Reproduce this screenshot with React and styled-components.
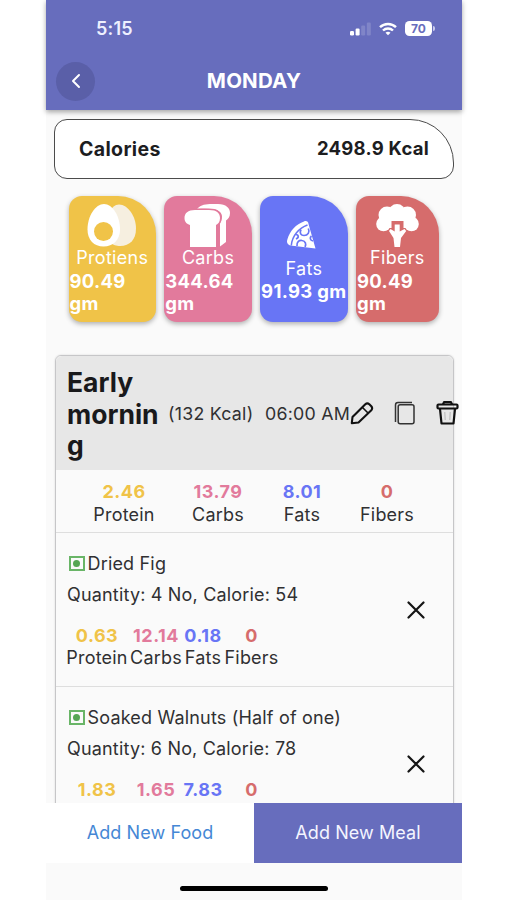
import React from "react";
import styled, { createGlobalStyle } from "styled-components";

const GlobalStyle = createGlobalStyle`
  * { box-sizing: border-box; }
  body { margin: 0; background: #fff; }
`;

const colors = {
  brand: "#676dbd",
  protein: "#f0c348",
  carbs: "#e27a9c",
  fats: "#6875f5",
  fibers: "#d66c6c",
};

const Screen = styled.main`
  width: 416px;
  height: 900px;
  margin-left: 46px;
  display: flex;
  flex-direction: column;
  background: #fafafa;
  color: #303032;
  font-family: Inter, "Liberation Sans", sans-serif;
  font-size: 18px;
  letter-spacing: 0.18px;
`;

const Header = styled.header`
  flex: none;
  height: 110px;
  background: ${colors.brand};
  color: #fff;
  box-shadow: 0 2px 5px rgba(0, 0, 0, 0.35);
  z-index: 1;
`;

const StatusBar = styled.div`
  height: 57px;
  padding: 0 28px 0 50px;
  display: flex;
  align-items: center;
  justify-content: space-between;
`;

const Clock = styled.span`
  font-size: 18px;
  font-weight: 600;
  letter-spacing: 0.2px;
  color: #eef0ff;
`;

const StatusIcons = styled.div`
  display: flex;
  align-items: center;
  gap: 8px;
  height: 16px;
`;

const Battery = styled.span`
  width: 27px;
  height: 15px;
  margin-right: 2px;
  border-radius: 4.5px;
  background: #fff;
  color: ${colors.brand};
  font-size: 12px;
  font-weight: 700;
  line-height: 16px;
  text-align: center;
  letter-spacing: 0;
  position: relative;

  &::after {
    content: "";
    position: absolute;
    right: -2.5px;
    top: 5px;
    width: 1.5px;
    height: 5px;
    border-radius: 0 2px 2px 0;
    background: #c9cbed;
  }
`;

const TitleBar = styled.div`
  display: grid;
  grid-template-columns: 39px 1fr 39px;
  align-items: center;
  height: 48px;
  padding: 0 10px;
`;

const BackButton = styled.button`
  width: 39px;
  height: 39px;
  padding: 0;
  border: 0;
  border-radius: 50%;
  background: #5a5fa8;
  display: grid;
  place-items: center;
`;

const Title = styled.h1`
  margin: 0;
  text-align: center;
  font-size: 20.5px;
  font-weight: 700;
  letter-spacing: 0.2px;
  line-height: 24px;
`;

const Content = styled.section`
  flex: 1;
  min-height: 0;
  overflow: hidden;
  padding: 9px 8px 0;
`;

const CaloriesCard = styled.div`
  height: 60px;
  border: 1.5px solid #4b4b4b;
  border-radius: 13px 44px 13px 13px;
  background: #fff;
  padding: 0 24px;
  display: flex;
  align-items: center;
  justify-content: space-between;
  color: #1d1d1f;
  font-size: 19.5px;
  font-weight: 700;
  letter-spacing: 0.35px;
`;

const CaloriesValue = styled.span`
  font-size: 18.5px;
  letter-spacing: 0.25px;
  margin-top: -2px;
`;

const Tiles = styled.div`
  display: flex;
  gap: 8.3px;
  margin: 17px 14px 0 14.5px;
`;

const Tile = styled.article`
  flex: ${(p) => (p.$narrow ? "0 0 83px" : "0 0 87.5px")};
  height: 126px;
  border-radius: 13px 38px 13px 13px;
  background: ${(p) => p.$color};
  color: #fff;
  box-shadow: 0 2px 5px rgba(0, 0, 0, 0.3);
  display: flex;
  flex-direction: column;
  align-items: center;
  justify-content: center;
`;

const TileLabel = styled.span`
  line-height: 22.5px;
  letter-spacing: 0.3px;
`;

const TileValue = styled.strong`
  align-self: stretch;
  padding-left: 1px;
  font-size: 18.5px;
  font-weight: 700;
  line-height: 22px;
  letter-spacing: 0.3px;
  white-space: ${(p) => (p.$oneLine ? "nowrap" : "normal")};
`;

const MealCard = styled.article`
  height: 600px;
  margin: 33px 0 0 1px;
  border: 1px solid #c6c6c8;
  border-radius: 6px 6px 0 0;
  box-shadow: 0 0 2px rgba(0, 0, 0, 0.16);
`;

const MealHeader = styled.div`
  height: 114px;
  background: #e7e7e7;
  border-radius: 6px 6px 0 0;
  display: flex;
  align-items: center;
  padding-left: 11px;
`;

const MealName = styled.h2`
  flex: 0 0 101px;
  margin: 3px 0 0;
  padding-right: 6px;
  font-size: 26.5px;
  font-weight: 700;
  line-height: 31.5px;
  letter-spacing: 0;
  color: #19191b;
`;

const MealInfo = styled.span`
  flex: 0 0 ${(p) => p.$width}px;
  white-space: nowrap;
  font-size: 17.8px;
  letter-spacing: 0.25px;
`;

const MealActions = styled.div`
  flex: none;
  display: flex;
  align-items: center;
  gap: 20px;
`;

const Totals = styled.div`
  height: 63px;
  padding-top: 11px;
  border-bottom: 1px solid #dedede;
  display: grid;
  grid-template-columns: 91px 97px 71px 99px;
  padding-left: 22.5px;
`;

const Stat = styled.div`
  display: flex;
  flex-direction: column;
  align-items: center;
  white-space: nowrap;
  line-height: 22.5px;
  letter-spacing: 0.2px;
`;

const StatValue = styled.strong`
  font-weight: 700;
  letter-spacing: 0.5px;
  color: ${(p) => p.$color};
`;

const FoodRow = styled.div`
  height: 154.3px;
  padding: 16.5px 28px 0 11px;
  border-bottom: 1px solid #dedede;
  display: flex;
  justify-content: space-between;
`;

const FoodName = styled.div`
  display: flex;
  align-items: center;
  gap: 3px;
  height: 28px;
  padding-left: 2px;
`;

const VegMark = styled.span`
  width: 15.5px;
  height: 15px;
  border: 2px solid #69b567;
  display: grid;
  place-items: center;

  &::after {
    content: "";
    width: 7px;
    height: 7px;
    border-radius: 50%;
    background: #55a653;
  }
`;

const Quantity = styled.div`
  line-height: 22px;
  margin-top: 6px;
`;

const FoodStats = styled.div`
  display: grid;
  grid-template-columns: 60px 58px 36px 61px;
  margin-top: 19px;
`;

const RemoveButton = styled.button`
  align-self: flex-start;
  margin-top: 51.5px;
  padding: 0;
  border: 0;
  background: none;
  display: flex;
`;

const Actions = styled.footer`
  flex: none;
  height: 59.5px;
  display: grid;
  grid-template-columns: 1fr 1fr;
`;

const ActionButton = styled.button`
  border: 0;
  padding: 0;
  font: inherit;
  letter-spacing: 0.08px;
  background: ${(p) => (p.$filled ? colors.brand : "#fff")};
  color: ${(p) => (p.$filled ? "#f4f5ff" : "#4587d5")};
`;

const HomeArea = styled.div`
  flex: none;
  height: 37.5px;
  display: flex;
  justify-content: center;
  padding-top: 23px;
`;

const HomeIndicator = styled.span`
  width: 148px;
  height: 5.5px;
  border-radius: 3px;
  background: #000;
`;

const EggIcon = () => (
  <svg width="50" height="43" viewBox="0 0 50 43">
    <path d="M32 .5c9 0 17 12 17 24 0 11-6 17.500-16 17.500-7 0-14-4-14-17.500C19 12.500 24 .5 32 .5Z" fill="#f6efe0" />
    <path d="M17 0c8.500 0 16 12 16 25.500 0 10.500-7 17-16.500 17S.5 36 .5 25.500C.5 12 8.500 0 17 0Z" fill="#fff" />
    <circle cx="16.500" cy="27.500" r="9.500" fill={colors.protein} />
  </svg>
);

const BreadIcon = () => (
  <svg width="48" height="43" viewBox="0 0 48 43">
    <path d="M13 5C17 .5 22 0 28 0h6c8 0 12 4 12 9 0 4-2 6-4 7.500V38l-6 4.500V19C40 13 38 7 31 5.500 25 4.500 20 4.500 13 5Z" fill="#fff" />
    <path
      d="M11 6h14c8 0 11 3.500 11 8 0 4-2 6-4 7v22H6V21c-3-1-5.500-3-5.500-7C.5 9 4 6 11 6Z"
      fill="#fff"
      stroke={colors.carbs}
      strokeWidth="3.200"
      paintOrder="stroke"
    />
  </svg>
);

const PizzaIcon = () => (
  <svg width="38" height="42" viewBox="0 0 38 42">
    <path d="M19 5.500c2-1 4.500 0 4.500 2.500l7 24.500-23-2.800C3 29.500 1 27 2.500 23 5 15 11 8 19 5.500Z" fill="#fff" />
    <path d="M22.500 9C14 12 7 20 6.300 29.500" fill="none" stroke={colors.fats} strokeWidth="1.500" />
    <g fill="none" stroke={colors.fats} strokeWidth="1.700">
      <path d="M16 13.500c-1.800 3.500 0 6 3 6 4 0 6-3.500 4.300-7" />
      <path d="M12 30c-.5-4 2-6 5-5.500 3.500.5 4.500 3.500 3 6.500" />
      <path d="M10.500 18.500c3 0 4 3 .5 4.500" />
      <path d="m26.500 20c-2 1.500-1.500 4.500 1.500 5" />
    </g>
  </svg>
);

const BroccoliIcon = () => (
  <svg width="43" height="43" viewBox="0 0 43 43">
    <g fill="#fff">
      <circle cx="7.500" cy="20" r="7.300" />
      <circle cx="11" cy="11" r="8.500" />
      <circle cx="21" cy="8.500" r="8.500" />
      <circle cx="31.500" cy="11" r="8.500" />
      <circle cx="35.500" cy="20" r="7.300" />
      <path d="M9 8h25v16H9Z" />
    </g>
    <path d="M15.500 28V17h12v11Z" fill={colors.fibers} />
    <path d="M18.700 20.500h5v7l4.800-2.500 1.700 2-5.200 7-1 9h-5.500l-1-9-4.500-7 1.500-2 4.200 2.500Z" fill="#fff" />
  </svg>
);

const SignalIcon = () => (
  <svg width="21" height="14" viewBox="0 0 21 14" fill="#fff">
    <rect x="0" y="9" width="4" height="4.500" rx="1.200" />
    <rect x="5.600" y="6.500" width="4" height="7" rx="1.200" />
    <rect x="11.200" y="3.500" width="4" height="10" rx="1.200" opacity=".17" />
    <rect x="16.800" y="0.500" width="4" height="13" rx="1.200" opacity=".17" />
  </svg>
);

const WifiIcon = () => (
  <svg width="18" height="14" viewBox="0 0 18 14" fill="none" stroke="#fff" strokeWidth="2.400">
    <path d="M1 5.200c4.500-4.300 11.500-4.300 16 0M4 8.500c2.800-2.700 7.200-2.700 10 0" />
    <path d="M6.500 10.700c1.500-1.300 3.500-1.300 5 0L9 13.300Z" fill="#fff" stroke="none" />
  </svg>
);

const PencilIcon = () => (
  <svg width="24" height="24" viewBox="0 0 24 24" fill="none" stroke="#111" strokeWidth="2.100" strokeLinejoin="round">
    <path d="m2.500 16 12.800-12.800q2-1.700 4 0l2 2q1.700 2 0 4L8.500 21.500l-6.700.7Z" />
    <path d="m12.500 6.500 5.500 5.500" strokeWidth="1.600" />
  </svg>
);

const CopyIcon = () => (
  <svg width="22" height="24" viewBox="0 0 22 24" fill="none" stroke="#333" strokeWidth="1.500">
    <path d="M1.500 21V4c0-1.600 1-2.500 2.500-2.500h14" />
    <rect x="4.200" y="3.800" width="15.800" height="19" rx="2" />
  </svg>
);

const TrashIcon = () => (
  <svg width="24" height="26" viewBox="0 0 24 26" fill="none" stroke="#111" strokeWidth="2.200" strokeLinejoin="round">
    <path d="M7 4.500 8 2.200h7l1 2.300" />
    <rect x="1.500" y="4.500" width="20" height="4" rx="1" />
    <path d="m4 9 1.500 14.500h12L19 9" />
    <path d="m8.800 12 .4 8M14.200 12l-.4 8" stroke="#aaa" strokeWidth=".8" />
  </svg>
);

const CloseIcon = () => (
  <svg width="18" height="18" viewBox="0 0 18 18" stroke="#151515" strokeWidth="2.200" strokeLinecap="round">
    <path d="m1.500 1.500 15 15m0-15-15 15" />
  </svg>
);

const nutrients = [
  ["Protein", colors.protein],
  ["Carbs", colors.carbs],
  ["Fats", colors.fats],
  ["Fibers", colors.fibers],
];

const tiles = [
  { label: "Protiens", value: "90.49 gm", color: colors.protein, Icon: EggIcon },
  { label: "Carbs", value: "344.64 gm", color: colors.carbs, Icon: BreadIcon },
  { label: "Fats", value: "91.93 gm", color: colors.fats, Icon: PizzaIcon, oneLine: true },
  { label: "Fibers", value: "90.49 gm", color: colors.fibers, Icon: BroccoliIcon, narrow: true },
];

const foods = [
  { name: "Dried Fig", quantity: "Quantity: 4 No, Calorie: 54", values: ["0.63", "12.14", "0.18", "0"] },
  { name: "Soaked Walnuts (Half of one)", quantity: "Quantity: 6 No, Calorie: 78", values: ["1.83", "1.65", "7.83", "0"], labelsHidden: true },
];

const Stats = ({ values, labelsHidden }) =>
  nutrients.map(([label, color], i) => (
    <Stat key={label}>
      <StatValue $color={color}>{values[i]}</StatValue>
      {!labelsHidden && <span>{label}</span>}
    </Stat>
  ));

export default function App() {
  return (
    <>
      <GlobalStyle />
      <Screen>
        <Header>
          <StatusBar>
            <Clock>5:15</Clock>
            <StatusIcons>
              <SignalIcon />
              <WifiIcon />
              <Battery>70</Battery>
            </StatusIcons>
          </StatusBar>
          <TitleBar>
            <BackButton aria-label="Back">
              <svg width="10" height="16" viewBox="0 0 10 16" fill="none" stroke="#fff" strokeWidth="2" strokeLinecap="round" strokeLinejoin="round">
                <path d="M8 2 2 8l6 6" />
              </svg>
            </BackButton>
            <Title>MONDAY</Title>
          </TitleBar>
        </Header>
        <Content>
          <CaloriesCard>
            <span>Calories</span>
            <CaloriesValue>2498.9 Kcal</CaloriesValue>
          </CaloriesCard>
          <Tiles>
            {tiles.map(({ label, value, color, Icon, oneLine, narrow }) => (
              <Tile key={label} $color={color} $narrow={narrow}>
                <Icon />
                <TileLabel>{label}</TileLabel>
                <TileValue $oneLine={oneLine}>{value}</TileValue>
              </Tile>
            ))}
          </Tiles>
          <MealCard>
            <MealHeader>
              <MealName>Early mornin&#8203;g</MealName>
              <MealInfo $width={97}>(132 Kcal)</MealInfo>
              <MealInfo $width={85}>06:00 AM</MealInfo>
              <MealActions>
                <PencilIcon />
                <CopyIcon />
                <TrashIcon />
              </MealActions>
            </MealHeader>
            <Totals>
              <Stats values={["2.46", "13.79", "8.01", "0"]} />
            </Totals>
            {foods.map((food) => (
              <FoodRow key={food.name}>
                <div>
                  <FoodName>
                    <VegMark />
                    {food.name}
                  </FoodName>
                  <Quantity>{food.quantity}</Quantity>
                  <FoodStats>
                    <Stats values={food.values} labelsHidden={food.labelsHidden} />
                  </FoodStats>
                </div>
                <RemoveButton aria-label={`Remove ${food.name}`}>
                  <CloseIcon />
                </RemoveButton>
              </FoodRow>
            ))}
          </MealCard>
        </Content>
        <Actions>
          <ActionButton>Add New Food</ActionButton>
          <ActionButton $filled>Add New Meal</ActionButton>
        </Actions>
        <HomeArea>
          <HomeIndicator />
        </HomeArea>
      </Screen>
    </>
  );
}
